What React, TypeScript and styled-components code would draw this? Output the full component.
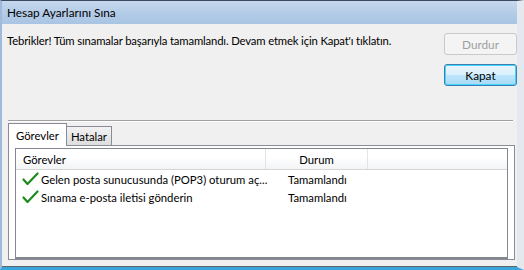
import React from 'react';
import styled, { createGlobalStyle } from 'styled-components';

const GlobalStyle = createGlobalStyle`
  html, body {
    margin: 0;
    padding: 0;
    background: #f0f0f0;
  }
  body {
    font-family: Lato, "Liberation Sans", sans-serif;
    font-size: 11.3px;
    color: #000;
  }
`;

const tasks = [
  { name: 'Gelen posta sunucusunda (POP3) oturum aç...', status: 'Tamamlandı' },
  { name: 'Sınama e-posta iletisi gönderin', status: 'Tamamlandı' },
];

const CheckIcon = () => (
  <CheckSvg width="17" height="14" viewBox="0 0 17 14">
    <path
      d="M1.5 7.5 L5.5 12 L15.5 1.5"
      fill="none"
      stroke="#1f8a1f"
      strokeWidth="2.2"
      strokeLinecap="round"
      strokeLinejoin="round"
    />
  </CheckSvg>
);

const App = () => {
  return (
    <>
      <GlobalStyle />
      <Window>
        <TitleBar>Hesap Ayarlarını Sına</TitleBar>
        <Body>
          <TopRow>
            <Message>
              Tebrikler! Tüm sınamalar başarıyla tamamlandı. Devam etmek için
              Kapat'ı tıklatın.
            </Message>
            <ButtonColumn>
              <Button disabled>Durdur</Button>
              <Button $focused>Kapat</Button>
            </ButtonColumn>
          </TopRow>
          <Separator />
          <TabStrip>
            <Tab $active>Görevler</Tab>
            <Tab>Hatalar</Tab>
          </TabStrip>
          <TabPanel>
            <ListView>
              <HeaderRow>
                <HeaderCell $width={250}>Görevler</HeaderCell>
                <HeaderCell $width={102} $center>
                  Durum
                </HeaderCell>
                <HeaderCell $last />
              </HeaderRow>
              {tasks.map((t) => (
                <Row key={t.name}>
                  <NameCell>
                    <CheckIcon />
                    <span>{t.name}</span>
                  </NameCell>
                  <StatusCell>{t.status}</StatusCell>
                </Row>
              ))}
            </ListView>
          </TabPanel>
        </Body>
      </Window>
    </>
  );
};

export default App;

const Window = styled.div`
  width: 524px;
  height: 270px;
  box-sizing: border-box;
  display: flex;
  flex-direction: column;
  border-top: 1px solid #3b4a5c;
  border-left: 2px solid #9fbadb;
  border-right: 7px solid #e4e9ef;
  border-bottom: 3px solid #3aa5d8;
  background: #f0f0f0;
  overflow: hidden;
`;

const TitleBar = styled.div`
  height: 23px;
  flex-shrink: 0;
  padding-left: 5px;
  display: flex;
  align-items: center;
  font-size: 11.8px;
  color: #000;
  background: linear-gradient(to bottom, #c6d8ee 0%, #b1cae6 60%, #a9c4e3 100%);
`;

const Body = styled.div`
  flex: 1;
  display: flex;
  flex-direction: column;
  padding: 8px 0 0 5px;
  border-bottom: 1px solid #5b6570;
`;

const TopRow = styled.div`
  display: flex;
  justify-content: space-between;
  align-items: flex-start;
  height: 88px;
`;

const Message = styled.div`
  padding-top: 2px;
  letter-spacing: -0.15px;
`;

const ButtonColumn = styled.div`
  display: flex;
  flex-direction: column;
  gap: 9px;
  padding-top: 1px;
`;

const Button = styled.button<{ $focused?: boolean }>`
  width: 73px;
  height: 22px;
  box-sizing: border-box;
  font-family: inherit;
  font-size: 11.8px;
  border-radius: 3px;
  padding: 0;
  color: #000;
  border: 1px solid ${(p) => (p.$focused ? '#3c7fb1' : '#707070')};
  background: ${(p) =>
    p.$focused
      ? 'linear-gradient(to bottom, #eaf6fd 0%, #d9f0fc 50%, #bee6fd 51%, #a7d9f5 100%)'
      : 'linear-gradient(to bottom, #f2f2f2 0%, #ebebeb 50%, #dddddd 51%, #cfcfcf 100%)'};
  box-shadow: ${(p) => (p.$focused ? 'inset 0 0 0 1px #48d3fb' : 'none')};

  &:disabled {
    color: #a0a0a0;
    border-color: #c9c9c9;
    background: #f4f4f4;
  }
`;

const Separator = styled.div`
  height: 0;
  border-top: 1px solid #a0a0a0;
  border-bottom: 1px solid #ffffff;
  margin: 0 4px 0 1px;
`;

const TabStrip = styled.div`
  display: flex;
  align-items: flex-end;
  margin: 1px 0 0 1px;
  height: 22px;
`;

const Tab = styled.div<{ $active?: boolean }>`
  box-sizing: border-box;
  padding: 0 ${(p) => (p.$active ? '7px' : '4px')};
  height: ${(p) => (p.$active ? '23px' : '19px')};
  display: flex;
  align-items: center;
  border: 1px solid #898c95;
  border-bottom: none;
  background: ${(p) =>
    p.$active ? '#ffffff' : 'linear-gradient(to bottom, #f2f2f2, #dedede)'};
  margin-bottom: ${(p) => (p.$active ? '-1px' : '0')};
  position: relative;
  z-index: ${(p) => (p.$active ? 1 : 0)};
  margin-left: ${(p) => (p.$active ? '0' : '-1px')};
`;

const TabPanel = styled.div`
  flex: 1;
  margin: 0 2px 6px 1px;
  border: 1px solid #898c95;
  background: #ffffff;
  padding: 2px 6px 0 6px;
  display: flex;
`;

const ListView = styled.div`
  flex: 1;
  border: 1px solid #828790;
  border-bottom-width: 2px;
  background: #ffffff;
`;

const HeaderRow = styled.div`
  display: flex;
  height: 20px;
  border-bottom: 1px solid #d5d5d5;
  background: linear-gradient(to bottom, #ffffff 0%, #ffffff 40%, #f3f4f6 100%);
`;

const HeaderCell = styled.div<{ $width?: number; $center?: boolean; $last?: boolean }>`
  ${(p) => (p.$last ? 'flex: 1;' : `width: ${p.$width}px;`)}
  box-sizing: border-box;
  display: flex;
  align-items: center;
  justify-content: ${(p) => (p.$center ? 'center' : 'flex-start')};
  padding-left: ${(p) => (p.$center ? '0' : '7px')};
  border-right: ${(p) => (p.$last ? 'none' : '1px solid #e3e4e6')};
`;

const Row = styled.div`
  display: flex;
  align-items: center;
  height: 18px;
  &:first-of-type {
    margin-top: 3px;
  }
`;

const NameCell = styled.div`
  width: 250px;
  display: flex;
  align-items: center;
  gap: 2px;
  padding-left: 6px;
  box-sizing: border-box;
  white-space: nowrap;
`;

const CheckSvg = styled.svg`
  flex-shrink: 0;
`;

const StatusCell = styled.div`
  padding-left: 22px;
`;
